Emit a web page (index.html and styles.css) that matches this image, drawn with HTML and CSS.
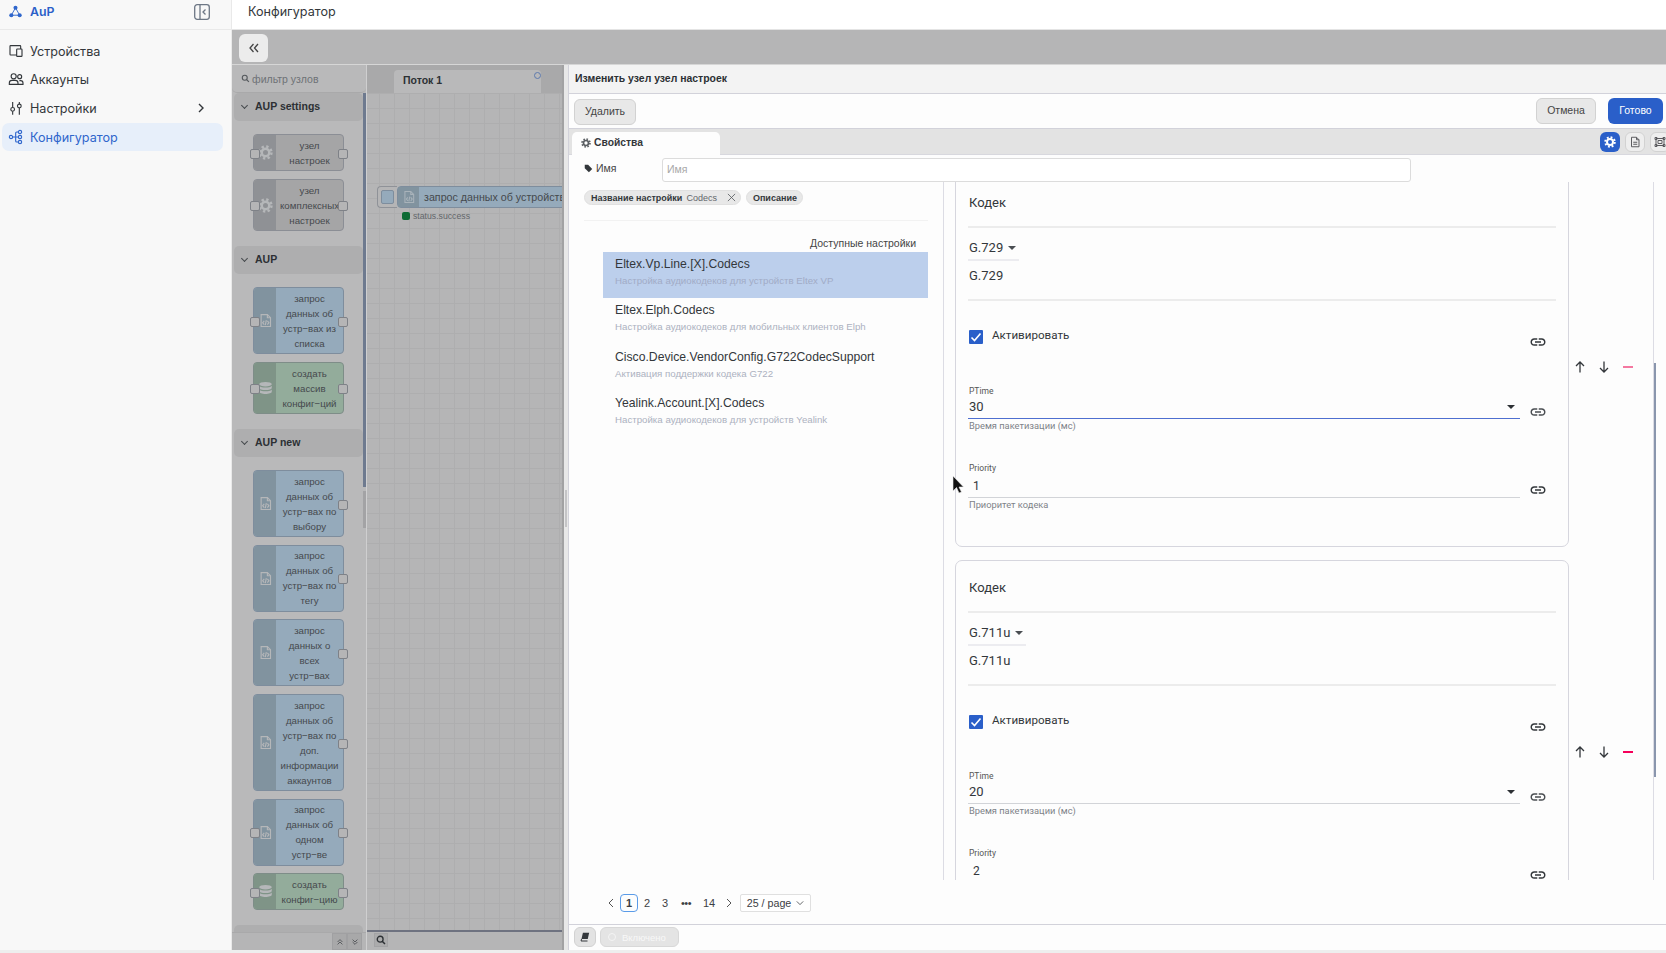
FILE: index.html
```html
<!DOCTYPE html>
<html lang="ru">
<head>
  <meta charset="UTF-8" />
  <title>Конфигуратор</title>
  <link rel="stylesheet" href="styles.css">
</head>
<body>

  <svg class="sprite">
    <symbol id="i-gear" viewBox="0 0 24 24"><circle cx="12" cy="12" r="6" fill="none" stroke="currentColor" stroke-width="4"/><circle cx="12" cy="12" r="9.5" fill="none" stroke="currentColor" stroke-width="4" stroke-dasharray="3.7 3.76"/></symbol>
    <symbol id="i-doc" viewBox="0 0 24 24"><g fill="none" stroke="currentColor" stroke-width="1.8"><path d="M5 2.5h10l5 5v14H5z"/><path d="M15 2.5v5h5"/><path d="M10 12.5l-2.5 3 2.5 3M15 12.5l2.5 3-2.5 3M13.3 11.5l-1.6 8"/></g></symbol>
    <symbol id="i-db" viewBox="0 0 24 24"><g fill="currentColor"><ellipse cx="12" cy="5" rx="10" ry="3.6"/><path d="M2 7.5c2 2.4 5.500 3 10 3s8-.6 10-3V11c0 2-4.500 3.400-10 3.400S2 13 2 11z"/><path d="M2 13.500c2 2.400 5.500 3 10 3s8-.6 10-3V17c0 2-4.500 3.600-10 3.600S2 19 2 17z"/></g></symbol>
    <symbol id="i-link" viewBox="0 0 24 24"><path fill="currentColor" d="M3.900 12c0-1.710 1.390-3.100 3.100-3.100h4V7H7c-2.760 0-5 2.240-5 5s2.240 5 5 5h4v-1.900H7c-1.710 0-3.100-1.390-3.100-3.100zM8 13h8v-2H8v2zm9-6h-4v1.900h4c1.710 0 3.100 1.390 3.100 3.100s-1.390 3.100-3.100 3.100h-4V17h4c2.760 0 5-2.240 5-5s-2.240-5-5-5z"/></symbol>
    <symbol id="i-up" viewBox="0 0 14 14"><path fill="none" stroke="currentColor" stroke-width="1.300" d="M7 12.500V2M3 6l4-4 4 4"/></symbol>
    <symbol id="i-down" viewBox="0 0 14 14"><path fill="none" stroke="currentColor" stroke-width="1.300" d="M7 1.500V12M3 8l4 4 4-4"/></symbol>
  </svg>

  <div class="app">
    <aside class="sidebar">
      <div class="brand">
        <svg class="brand-logo" viewBox="0 0 14 14"><path d="M7 3L2.500 11h9z" fill="none" stroke="currentColor" stroke-width="1"/><circle cx="7" cy="3" r="2.200" fill="currentColor"/><circle cx="2.500" cy="11" r="2.200" fill="currentColor"/><circle cx="11.500" cy="11" r="2.200" fill="currentColor"/></svg>
        <span class="brand-name">AuP</span>
        <svg class="brand-toggle" viewBox="0 0 16 16"><rect x=".7" y=".7" width="14.600" height="14.600" rx="2.500" fill="none" stroke="currentColor" stroke-width="1.300"/><path d="M6 1v14M11.500 5.500L9 8l2.500 2.500" fill="none" stroke="currentColor" stroke-width="1.300"/></svg>
      </div>
      <nav class="nav">
        <a class="nav-item">
          <svg class="nav-icon" viewBox="0 0 24 24"><path d="M13 10a1 1 0 0 1 1-1h6a1 1 0 0 1 1 1v9a1 1 0 0 1-1 1h-6a1 1 0 0 1-1-1zM19 9V5a1 1 0 0 0-1-1H4a1 1 0 0 0-1 1v12a1 1 0 0 0 1 1h9"/></svg>
          <span>Устройства</span>
        </a>
        <a class="nav-item">
          <svg class="nav-icon" viewBox="0 0 24 24"><circle cx="8.500" cy="8" r="3.800"/><circle cx="17.500" cy="8.500" r="3"/><path d="M2 20v-2a4 4 0 0 1 4-4h5a4 4 0 0 1 4 4v2zM17 14.500h2a3.500 3.500 0 0 1 3.500 3.500v2H15"/></svg>
          <span>Аккаунты</span>
        </a>
        <a class="nav-item">
          <svg class="nav-icon" viewBox="0 0 24 24"><circle cx="7" cy="14" r="2.800"/><circle cx="17" cy="9" r="2.800"/><path d="M7 3v8M7 17v5M17 3v3M17 12v10"/></svg>
          <span>Настройки</span>
          <svg class="nav-chevron" viewBox="0 0 10 10"><path d="M3 1l4 4-4 4" fill="none" stroke="currentColor" stroke-width="1.400"/></svg>
        </a>
        <a class="nav-item active">
          <svg class="nav-icon" viewBox="0 0 24 24"><circle cx="4.500" cy="12" r="2.500"/><circle cx="18" cy="4.500" r="2.500"/><circle cx="18" cy="12" r="2.500"/><circle cx="18" cy="19.500" r="2.500"/><path d="M7 12h8.500M15.500 4.500H13a1.500 1.500 0 0 0-1.500 1.500v12a1.500 1.500 0 0 0 1.500 1.500h2.500"/></svg>
          <span>Конфигуратор</span>
        </a>
      </nav>
    </aside>

    <main class="main">
      <header class="topbar">Конфигуратор</header>
      <div class="toolbar">
        <button class="collapse-btn">
          <svg viewBox="0 0 12 12"><path d="M5.500 2L2 6l3.500 4M10 2L6.500 6 10 10" fill="none" stroke="currentColor" stroke-width="1.300"/></svg>
        </button>
      </div>

      <div class="editor">
        <section class="palette">
          <div class="palette-filter">
            <svg viewBox="0 0 12 12"><circle cx="5" cy="5" r="3.300" fill="none" stroke="currentColor" stroke-width="1.500"/><path d="M7.500 7.500l3 3" stroke="currentColor" stroke-width="1.600"/></svg>
            <span>фильтр узлов</span>
          </div>
          <div class="palette-scrollarea">
            <div class="palette-list">
              <div class="category"><span class="cat-arrow"></span>AUP settings</div>
              <div class="cat-nodes short">
                <div class="node gray in out"><div class="node-icon"><svg><use href="#i-gear"/></svg></div><div class="node-label">узел<br>настроек</div></div>
                <div class="node gray in out"><div class="node-icon"><svg><use href="#i-gear"/></svg></div><div class="node-label">узел<br>комплексных<br>настроек</div></div>
              </div>
              <div class="category"><span class="cat-arrow"></span>AUP</div>
              <div class="cat-nodes short">
                <div class="node blue in out"><div class="node-icon"><svg><use href="#i-doc"/></svg></div><div class="node-label">запрос<br>данных об<br>устр−вах из<br>списка</div></div>
                <div class="node green in out"><div class="node-icon"><svg><use href="#i-db"/></svg></div><div class="node-label">создать<br>массив<br>конфиг−ций</div></div>
              </div>
              <div class="category"><span class="cat-arrow"></span>AUP new</div>
              <div class="cat-nodes">
                <div class="node blue out"><div class="node-icon"><svg><use href="#i-doc"/></svg></div><div class="node-label">запрос<br>данных об<br>устр−вах по<br>выбору</div></div>
                <div class="node blue out"><div class="node-icon"><svg><use href="#i-doc"/></svg></div><div class="node-label">запрос<br>данных об<br>устр−вах по<br>тегу</div></div>
                <div class="node blue out"><div class="node-icon"><svg><use href="#i-doc"/></svg></div><div class="node-label">запрос<br>данных о<br>всех<br>устр−вах</div></div>
                <div class="node blue out"><div class="node-icon"><svg><use href="#i-doc"/></svg></div><div class="node-label">запрос<br>данных об<br>устр−вах по<br>доп.<br>информации<br>аккаунтов</div></div>
                <div class="node blue in out"><div class="node-icon"><svg><use href="#i-doc"/></svg></div><div class="node-label">запрос<br>данных об<br>одном<br>устр−ве</div></div>
                <div class="node green in out"><div class="node-icon"><svg><use href="#i-db"/></svg></div><div class="node-label">создать<br>конфиг−цию</div></div>
              </div>
              <div class="category"></div>
            </div>
            <div class="palette-scroll">
              <div class="scroll-thumb"></div>
              <div class="scroll-grip"></div>
            </div>
          </div>
          <div class="palette-foot">
            <button class="foot-btn"><svg viewBox="0 0 10 10"><path d="M2 5l3-3 3 3M2 8l3-3 3 3" fill="none" stroke="currentColor" stroke-width="1"/></svg></button><button class="foot-btn"><svg viewBox="0 0 10 10"><path d="M2 2l3 3 3-3M2 5l3 3 3-3" fill="none" stroke="currentColor" stroke-width="1"/></svg></button>
          </div>
        </section>

        <section class="workspace">
          <div class="ws-tabs">
            <div class="ws-tab">Поток 1<span class="ws-tab-dot"></span></div>
          </div>
          <div class="ws-grid">
            <div class="flow-node">
              <div class="flow-button"><span></span></div>
              <div class="flow-body">
                <div class="flow-icon"><svg><use href="#i-doc"/></svg></div>
                <div class="flow-label">запрос данных об устройстве</div>
              </div>
              <div class="flow-status"><span class="status-dot"></span>status.success</div>
            </div>
          </div>
          <div class="ws-foot">
            <button class="ws-search"><svg viewBox="0 0 12 12"><circle cx="5" cy="5" r="3.500" fill="none" stroke="currentColor" stroke-width="1.600"/><path d="M7.500 7.500l3.300 3.300" stroke="currentColor" stroke-width="1.800"/></svg></button>
          </div>
        </section>

        <div class="ws-sep"><span></span></div>

        <section class="tray">
          <div class="tray-title">Изменить узел узел настроек</div>
          <div class="tray-actions">
            <button class="btn">Удалить</button>
            <div class="tray-actions-right">
              <button class="btn btn-cancel">Отмена</button>
              <button class="btn btn-primary">Готово</button>
            </div>
          </div>
          <div class="tray-tabs">
            <div class="tray-tab"><svg><use href="#i-gear"/></svg>Свойства</div>
            <div class="tray-tab-btns">
              <button class="tab-btn on"><svg><use href="#i-gear"/></svg></button>
              <button class="tab-btn"><svg viewBox="0 0 24 24"><path d="M5 2.500h10l5 5v14H5zM15 2.500v5h5M8.500 12.500h8M8.500 16.500h8" fill="none" stroke="currentColor" stroke-width="2"/></svg></button>
              <button class="tab-btn"><svg viewBox="0 0 24 24"><path d="M4 5h16v14H4zM2 3h4v4H2zM18 3h4v4h-4zM2 17h4v4H2zM18 17h4v4h-4zM8 9h8v6H8z" fill="none" stroke="currentColor" stroke-width="2"/></svg></button>
            </div>
          </div>
          <div class="name-row">
            <label class="name-label">
              <svg viewBox="0 0 12 12"><path d="M1 1h4.500L11 6.500 6.500 11 1 5.500z" fill="currentColor"/></svg>Имя
            </label>
            <div class="name-input">Имя</div>
          </div>

          <div class="tray-body">
            <div class="settings-col">
              <div class="chips">
                <span class="chip"><b>Название настройки</b><span class="chip-value">Codecs</span>
                  <svg viewBox="0 0 10 10"><path d="M1 1l8 8M9 1l-8 8" stroke="currentColor" stroke-width=".9"/></svg>
                </span>
                <span class="chip chip-plain"><b>Описание</b></span>
              </div>
              <div class="settings-divider"></div>
              <div class="settings-caption">Доступные настройки</div>
              <ul class="settings-list">
                <li class="selected"><div class="set-name">Eltex.Vp.Line.[X].Codecs</div><div class="set-desc">Настройка аудиокодеков для устройств Eltex VP</div></li>
                <li><div class="set-name">Eltex.Elph.Codecs</div><div class="set-desc">Настройка аудиокодеков для мобильных клиентов Elph</div></li>
                <li><div class="set-name">Cisco.Device.VendorConfig.G722CodecSupport</div><div class="set-desc">Активация поддержки кодека G722</div></li>
                <li><div class="set-name">Yealink.Account.[X].Codecs</div><div class="set-desc">Настройка аудиокодеков для устройств Yealink</div></li>
              </ul>
            </div>

            <div class="codecs-col">
              <div class="codecs-list">
                <div class="codec-row">
                  <div class="card">
                    <div class="card-title">Кодек</div>
                    <div class="inline-select">G.729<i class="caret"></i></div>
                    <div class="card-value">G.729</div>
                    <div class="check-row">
                      <div class="field-main"><span class="checkbox"><svg viewBox="0 0 14 14"><path d="M2.500 7.500l3 3 6-7" fill="none" stroke="#fff" stroke-width="1.600"/></svg></span>Активировать</div>
                      <svg class="link-icon link-check"><use href="#i-link"/></svg>
                    </div>
                    <div class="field">
                      <div class="field-main">
                        <div class="field-label">PTime</div>
                        <div class="field-input focused">30<i class="caret caret-right"></i></div>
                        <div class="field-help">Время пакетизации (мс)</div>
                      </div>
                      <svg class="link-icon link-field"><use href="#i-link"/></svg>
                    </div>
                    <div class="field field-second">
                      <div class="field-main">
                        <div class="field-label">Priority</div>
                        <div class="field-input number">1</div>
                        <div class="field-help">Приоритет кодека</div>
                      </div>
                      <svg class="link-icon link-number"><use href="#i-link"/></svg>
                    </div>
                  </div>
                  <div class="row-actions">
                    <svg><use href="#i-up"/></svg>
                    <svg><use href="#i-down"/></svg>
                    <span class="remove pale"></span>
                  </div>
                </div>

                <div class="codec-row">
                  <div class="card">
                    <div class="card-title">Кодек</div>
                    <div class="inline-select">G.711u<i class="caret"></i></div>
                    <div class="card-value">G.711u</div>
                    <div class="check-row">
                      <div class="field-main"><span class="checkbox"><svg viewBox="0 0 14 14"><path d="M2.500 7.500l3 3 6-7" fill="none" stroke="#fff" stroke-width="1.600"/></svg></span>Активировать</div>
                      <svg class="link-icon link-check"><use href="#i-link"/></svg>
                    </div>
                    <div class="field">
                      <div class="field-main">
                        <div class="field-label">PTime</div>
                        <div class="field-input">20<i class="caret caret-right"></i></div>
                        <div class="field-help">Время пакетизации (мс)</div>
                      </div>
                      <svg class="link-icon link-field"><use href="#i-link"/></svg>
                    </div>
                    <div class="field field-second">
                      <div class="field-main">
                        <div class="field-label">Priority</div>
                        <div class="field-input number">2</div>
                        <div class="field-help">Приоритет кодека</div>
                      </div>
                      <svg class="link-icon link-number"><use href="#i-link"/></svg>
                    </div>
                  </div>
                  <div class="row-actions">
                    <svg><use href="#i-up"/></svg>
                    <svg><use href="#i-down"/></svg>
                    <span class="remove"></span>
                  </div>
                </div>
              </div>
              <div class="codecs-scroll"><div></div></div>
            </div>
          </div>

          <div class="pager">
            <svg class="pager-arrow" viewBox="0 0 10 10"><path d="M7 1L3 5l4 4" fill="none" stroke="currentColor"/></svg>
            <span class="page current">1</span>
            <span class="page">2</span>
            <span class="page">3</span>
            <span class="page dots">•••</span>
            <span class="page wide">14</span>
            <svg class="pager-arrow" viewBox="0 0 10 10"><path d="M3 1l4 4-4 4" fill="none" stroke="currentColor"/></svg>
            <span class="page-size">25 / page<svg viewBox="0 0 10 10"><path d="M1 3l4 4 4-4" fill="none" stroke="currentColor"/></svg></span>
          </div>
          <div class="tray-footer">
            <button class="foot-book"><svg viewBox="0 0 12 12"><path d="M3.500 1h7.500L9.300 8.500H1.800z" fill="currentColor"/><path d="M1.800 8.500L1.300 10.800H9" fill="none" stroke="currentColor" stroke-width="1.200"/></svg></button>
            <button class="foot-enabled"><span></span>Включено</button>
          </div>
        </section>
      </div>
    </main>
  </div>

  <svg class="cursor" viewBox="0 0 12 19"><path d="M1 1v15l3.500-3.500L7 18l2.500-1-2.500-5h4.500z" fill="#111" stroke="#eee" stroke-width=".6"/></svg>

</body>
</html>
```

FILE: styles.css
```css
* {
  box-sizing: border-box;
}

html, body {
  margin: 0;
  height: 953px;
  overflow: hidden;
}

body {
  background: #eeeeee;
  font-family: 'Liberation Sans', Arial, sans-serif;
  color: #33373b;
  position: relative;
}

button {
  font-family: inherit;
  padding: 0;
  cursor: pointer;
}

.sprite {
  position: absolute;
  width: 0;
  height: 0;
}

.cursor {
  position: absolute;
  left: 952px;
  top: 475px;
  width: 12px;
  height: 19px;
}

.app {
  display: flex;
  height: 950px;
}

/* sidebar */
.sidebar {
  width: 232px;
  flex: none;
  background: #f8f8f8;
  border-right: 1px solid #e9e9e9;
  font-family: Inter, sans-serif;
  font-size: 12.600px;
}

.brand {
  height: 30px;
  display: flex;
  align-items: center;
  padding: 0 21px 6px 9px;
  border-bottom: 1px solid #e9e9e9;
}

.brand-logo {
  width: 13px;
  height: 13px;
  color: #2f66cc;
}

.brand-name {
  margin-left: 8px;
  color: #2a5fc8;
  font-weight: 600;
  font-size: 12.300px;
}

.brand-toggle {
  margin-left: auto;
  width: 16px;
  height: 16px;
  color: #6d7785;
}

.nav {
  padding: 5px 8px 0 2px;
}

.nav-item {
  display: flex;
  align-items: center;
  height: 28px;
  margin-top: 1px;
  padding-left: 6px;
  border-radius: 7px;
  color: #33373b;
}

.nav-item:first-child {
  padding-top: 2px;
}

.nav-item span {
  margin-left: 6px;
}

.nav-icon {
  width: 16px;
  height: 16px;
  fill: none;
  stroke: currentColor;
  stroke-width: 1.700;
}

.nav-chevron {
  width: 10px;
  height: 10px;
  margin-left: auto;
  margin-right: 17px;
}

.nav-item.active {
  background: #e7effa;
  color: #2f66cc;
}

/* main column */
.main {
  flex: 1;
  min-width: 0;
  display: flex;
  flex-direction: column;
}

.topbar {
  height: 30px;
  background: #ffffff;
  border-bottom: 1px solid #e4e4e4;
  padding: 4px 0 0 16px;
  font-family: Inter, sans-serif;
  font-size: 12.600px;
  color: #33373b;
}

.toolbar {
  height: 35px;
  background: #b5b5b6;
  padding: 4px 0 0 7px;
  border-bottom: 1px solid #d6d6d6;
}

.collapse-btn {
  width: 29px;
  height: 28px;
  border: none;
  border-radius: 6px;
  background: #ececec;
  color: #444;
  display: flex;
  align-items: center;
  justify-content: center;
}

.collapse-btn svg {
  width: 12px;
  height: 12px;
}

.editor {
  flex: 1;
  min-height: 0;
  display: flex;
}

/* node palette */
.palette {
  width: 134px;
  flex: none;
  background: #b9b9ba;
  display: flex;
  flex-direction: column;
  color: #45494d;
}

.palette-filter {
  height: 28px;
  display: flex;
  align-items: center;
  padding-left: 9px;
  font-size: 10.500px;
  color: #6e7276;
  border-bottom: 1px solid #a9a9aa;
  border-radius: 0 0 5px 5px;
}

.palette-filter svg {
  width: 9px;
  height: 9px;
  margin-right: 2px;
  color: #55595d;
}

.palette-scrollarea {
  flex: 1;
  min-height: 0;
  display: flex;
}

.palette-list {
  width: 131px;
  overflow: hidden;
  padding-left: 2px;
}

.category {
  height: 28px;
  padding-bottom: 2px;
  border-radius: 5px;
  background: #aeaeaf;
  font-size: 10.500px;
  font-weight: bold;
  color: #2c3034;
  display: flex;
  align-items: center;
}

.cat-arrow {
  width: 5px;
  height: 5px;
  margin: -2px 8px 0 8px;
  border-right: 1px solid #45494d;
  border-bottom: 1px solid #45494d;
  transform: rotate(45deg);
}

.cat-nodes {
  display: flex;
  flex-direction: column;
  gap: 7.700px;
  padding: 13px 0 15px 19px;
}

.cat-nodes.short {
  gap: 8px;
}

.node {
  position: relative;
  width: 91px;
  display: flex;
  border: 1px solid #8b8e95;
  border-radius: 4px;
  background: #a5a5a6;
}

.node-icon {
  width: 22px;
  flex: none;
  display: flex;
  align-items: center;
  justify-content: center;
  border-radius: 3px 0 0 3px;
  color: #b5b7b9;
}

.node-icon svg {
  width: 15px;
  height: 15px;
}

.node-label {
  flex: 1;
  padding: 2.500px 0;
  font-size: 9.700px;
  line-height: 15px;
  text-align: center;
  white-space: nowrap;
}

.node.gray .node-icon {
  background: #8f9195;
}

.node.blue {
  background: #95aabb;
  border-color: #7e8d9d;
}

.node.blue .node-icon {
  background: #81939f;
}

.node.green {
  background: #93ac9b;
  border-color: #7e8d88;
}

.node.green .node-icon {
  background: #7f9487;
}

.node.in::before,
.node.out::after {
  content: '';
  position: absolute;
  top: 50%;
  width: 8px;
  height: 8px;
  margin-top: -4px;
  background: #b5b5b6;
  border: 1px solid #7e8187;
  border-radius: 2px;
}

.node.in::before {
  left: -4px;
}

.node.out::after {
  right: -5px;
}

.palette-scroll {
  width: 3px;
  flex: none;
}

.scroll-thumb {
  width: 3px;
  height: 394px;
  background: #6e7a8f;
}

.scroll-grip {
  width: 3px;
  height: 37px;
  margin-top: 4px;
  background: #a3a3a5;
}

.palette-foot {
  height: 18px;
  display: flex;
  justify-content: flex-end;
  padding-right: 4px;
  background: #b5b5b6;
  border-top: 1px solid #a9a9aa;
}

.foot-btn {
  width: 15px;
  height: 17px;
  border: 1px solid #a0a0a2;
  background: #a8a8a9;
  color: #45494d;
  display: flex;
  align-items: center;
  justify-content: center;
}

.foot-btn svg {
  width: 8px;
  height: 8px;
}

/* workspace */
.workspace {
  width: 196px;
  flex: none;
  display: flex;
  flex-direction: column;
  border-left: 1px solid #cfcfd0;
}

.ws-tabs {
  height: 28px;
  background: #a9a9aa;
  padding: 5px 0 0 27px;
}

.ws-tab {
  position: relative;
  width: 147px;
  height: 23px;
  border-radius: 4px 4px 0 0;
  background: #b9b9ba;
  padding: 4px 0 0 9px;
  font-size: 10.500px;
  font-weight: bold;
  color: #2c3034;
}

.ws-tab-dot {
  position: absolute;
  right: 0;
  top: 2px;
  width: 7px;
  height: 7px;
  border: 1px solid #5d79ad;
  border-radius: 50%;
}

.ws-grid {
  flex: 1;
  position: relative;
  overflow: hidden;
  background-color: #b5b5b6;
  background-image: linear-gradient(#aeaeaf 1px, transparent 1px), linear-gradient(90deg, #aeaeaf 1px, transparent 1px);
  background-size: 15px 15px;
  background-position: -3px 0;
}

.flow-node {
  position: absolute;
  left: 10px;
  top: 93px;
  display: flex;
  color: #45494d;
}

.flow-button {
  width: 20px;
  height: 22px;
  border: 1px solid #8f9298;
  border-right: none;
  border-radius: 4px 0 0 4px;
  background: #b5b5b6;
  padding: 3px;
}

.flow-button span {
  display: block;
  width: 13px;
  height: 14px;
  border: 1px solid #7e8d9d;
  border-radius: 2px;
  background: #95aabb;
}

.flow-body {
  width: 220px;
  height: 22px;
  display: flex;
  border: 1px solid #7e8d9d;
  border-radius: 4px;
  background: #95aabb;
}

.flow-icon {
  width: 21px;
  flex: none;
  background: #81939f;
  display: flex;
  align-items: center;
  justify-content: center;
  color: #a9b3ba;
}

.flow-icon svg {
  width: 14px;
  height: 14px;
}

.flow-label {
  padding-left: 5px;
  font-size: 10.700px;
  line-height: 20px;
  white-space: nowrap;
}

.flow-status {
  position: absolute;
  left: 25px;
  top: 25px;
  display: flex;
  align-items: center;
  font-size: 8.700px;
  color: #62666a;
  white-space: nowrap;
}

.status-dot {
  width: 8px;
  height: 8px;
  margin-right: 3px;
  border-radius: 2px;
  background: #0c6b34;
}

.ws-foot {
  height: 20px;
  background: #b5b5b6;
  border-top: 2px solid #6e7280;
  padding: 1px 0 0 7px;
}

.ws-search {
  width: 14px;
  height: 14px;
  border: 1px solid #a3a3a5;
  background: #ababac;
  color: #2c3034;
  display: flex;
  align-items: center;
  justify-content: center;
}

.ws-search svg {
  width: 10px;
  height: 10px;
}

.ws-sep {
  width: 6px;
  flex: none;
  background: #e8e8e8;
  border-left: 2px solid #a2a2a3;
  padding-top: 425px;
}

.ws-sep span {
  display: block;
  width: 2px;
  height: 37px;
  margin-left: 1px;
  background: #c4c4c6;
}

/* edit tray */
.tray {
  flex: 1;
  min-width: 0;
  display: flex;
  flex-direction: column;
  background: #fdfdfd;
  border-left: 1px solid #d2d2da;
  overflow: hidden;
}

.tray-title {
  height: 29px;
  flex: none;
  background: #f3f3f3;
  border-bottom: 1px solid #d2d2da;
  padding: 8px 0 0 6px;
  font-size: 10.450px;
  font-weight: bold;
  color: #2c3034;
}

.tray-actions {
  height: 34px;
  flex: none;
  display: flex;
  justify-content: space-between;
  padding: 5px 3px 0 5px;
}

.tray-actions-right {
  display: flex;
  gap: 12px;
}

.btn {
  height: 26px;
  width: 62px;
  border: 1px solid #d2d2d2;
  border-radius: 6px;
  background: #e8e8e8;
  color: #444;
  font-size: 10.500px;
  padding-bottom: 2px;
}

.btn-cancel {
  width: 60px;
  margin-top: -1px;
}

.btn-primary {
  width: 55px;
  margin-top: -1px;
  border: none;
  background: #2a5fc9;
  color: #ffffff;
}

.tray-tabs {
  height: 27px;
  flex: none;
  display: flex;
  justify-content: space-between;
  background: #e3e3e3;
  border-top: 1px solid #d2d2da;
  border-bottom: 1px solid #d8d8de;
  padding: 3px 0 0 3px;
}

.tray-tab {
  width: 148px;
  height: 23px;
  margin-bottom: 1px;
  display: flex;
  align-items: center;
  padding: 0 0 2px 9px;
  border-radius: 5px 5px 0 0;
  background: #fdfdfd;
  font-size: 10.300px;
  font-weight: bold;
  color: #33373b;
}

.tray-tab svg {
  width: 10px;
  height: 10px;
  margin-right: 3px;
  color: #5a5e62;
}

.tray-tab-btns {
  display: flex;
  gap: 5px;
  margin-right: -4px;
}

.tab-btn {
  width: 20px;
  height: 20px;
  flex: none;
  border: 1px solid #d2d2d2;
  border-radius: 6px;
  background: #eeeeee;
  color: #5c5c60;
  display: flex;
  align-items: center;
  justify-content: center;
}

.tab-btn svg {
  width: 12px;
  height: 12px;
}

.tab-btn.on {
  border: none;
  background: #2a5fc9;
  color: #ffffff;
}

.name-row {
  height: 27px;
  flex: none;
  display: flex;
  padding: 3px 0 0 15px;
}

.name-label {
  width: 78px;
  display: flex;
  align-items: center;
  height: 20px;
  font-size: 10.500px;
  color: #444;
}

.name-label svg {
  width: 9px;
  height: 9px;
  margin-right: 3px;
  color: #33373b;
}

.name-input {
  width: 749px;
  height: 24px;
  border: 1px solid #dcdcdc;
  border-radius: 3px;
  background: #ffffff;
  padding: 4px 0 0 4px;
  font-size: 10.500px;
  color: #a8a8a8;
}

.tray-body {
  height: 698px;
  flex: none;
  display: flex;
}

/* settings list */
.settings-col {
  width: 375px;
  flex: none;
  border-right: 1px solid #dcdce4;
  padding: 8px 15px 0 15px;
}

.chips {
  display: flex;
  gap: 5px;
}

.chip {
  height: 15px;
  display: flex;
  align-items: center;
  padding: 0 4px 0 6px;
  border-radius: 8px;
  background: #e8e8e8;
  border: 1px solid #e0e0e0;
  font-size: 9px;
  color: #33373b;
}

.chip-value {
  margin-left: 4px;
  color: #62666a;
}

.chip svg {
  width: 9px;
  height: 9px;
  margin-left: 10px;
  color: #55595d;
}

.chip-plain {
  padding-right: 5px;
}

.settings-divider {
  height: 1px;
  margin-top: 15px;
  background: #f2f2f2;
}

.settings-caption {
  margin-top: 16px;
  padding-right: 12px;
  text-align: right;
  font-size: 10.500px;
  line-height: 13px;
  color: #444;
}

.settings-list {
  list-style: none;
  margin: 2px 0 0 19px;
  padding: 0;
}

.settings-list li {
  height: 46.300px;
  padding: 5px 0 0 12px;
}

.settings-list li.selected {
  background: #bccfec;
}

.set-name {
  font-size: 12.200px;
  line-height: 14px;
  color: #33373b;
}

.set-desc {
  margin-top: 4px;
  font-size: 9.700px;
  line-height: 12px;
  color: #acb1c0;
}

.selected .set-desc {
  color: #a1abc6;
}

/* codec cards */
.codecs-col {
  flex: 1;
  min-width: 0;
  display: flex;
  overflow: hidden;
}

.codecs-list {
  width: 709px;
  flex: none;
  overflow: hidden;
  padding: 0 0 0 11px;
}

.codec-row {
  display: flex;
  margin-bottom: 13px;
}

.codec-row:first-child {
  margin-top: -7px;
}

.card {
  width: 614px;
  height: 372px;
  flex: none;
  border: 1px solid #d6d6de;
  border-radius: 7px;
  padding: 0 12px;
  font-family: Roboto, sans-serif;
  font-size: 14px;
  color: #33373b;
}

.card-title {
  height: 52px;
  padding: 18px 0 0 1px;
  line-height: 18px;
  border-bottom: 2px solid #ececec;
  font-size: 13px;
}

.inline-select {
  width: fit-content;
  height: 25px;
  margin-top: 8px;
  padding: 3px 0 0 1px;
  border-bottom: 2px solid #ececf0;
  line-height: 18px;
  font-size: 13px;
  display: flex;
  gap: 5px;
}

.caret {
  display: inline-block;
  margin-top: 7px;
  margin-right: 3px;
  border-left: 4px solid transparent;
  border-right: 4px solid transparent;
  border-top: 4px solid #4a4e52;
}

.caret-right {
  margin: 7px 5px 0 auto;
  border-top-color: #2c3034;
}

.card-value {
  height: 35px;
  margin-top: 5px;
  padding: 1px 0 0 1px;
  line-height: 18px;
  font-size: 13px;
  border-bottom: 2px solid #ececec;
}

.check-row {
  height: 54px;
  margin-top: 29px;
  display: flex;
  font-size: 11.600px;
}

.field-main {
  width: 552px;
  flex: none;
}

.check-row .field-main {
  display: flex;
  height: 14px;
  line-height: 11px;
  color: #33373b;
}

.checkbox {
  width: 14px;
  height: 14px;
  margin: 0 9px 0 1px;
  border-radius: 1px;
  background: #2a5fc9;
}

.checkbox svg {
  display: block;
  width: 14px;
  height: 14px;
}

.field {
  display: flex;
}

.field-second {
  margin-top: 29px;
}

.field-label {
  height: 12px;
  padding: 1px 0 0 1px;
  font-size: 8.500px;
  line-height: 12px;
  color: #555;
}

.field-input {
  height: 23px;
  display: flex;
  padding: 2px 0 0 1px;
  line-height: 18px;
  font-size: 13px;
  border-bottom: 1px solid #d2d4d8;
}

.field-input.focused {
  border-bottom-color: #4e6fd0;
}

.field-input.number {
  height: 25px;
  padding: 4px 0 0 5px;
  font-size: 12px;
}

.field-help {
  margin-top: 1px;
  padding-left: 1px;
  font-size: 9.300px;
  line-height: 12px;
  color: #7d8288;
}

.link-icon {
  width: 18px;
  height: 18px;
  margin-left: 9px;
  color: #33373b;
}

.link-check {
  margin-top: 3px;
}

.link-field {
  margin-top: 19px;
  color: #4a4e52;
}

.link-number {
  margin-top: 20px;
}

.row-actions {
  display: flex;
  align-items: center;
  gap: 10px;
  padding: 12px 0 0 4px;
  color: #33373b;
}

.row-actions svg {
  width: 14px;
  height: 14px;
}

.remove {
  width: 10px;
  height: 2px;
  margin-left: 2px;
  background: #f5005a;
}

.remove.pale {
  background: #f478a0;
}

.codecs-scroll {
  width: 3px;
  padding-top: 181px;
  border-left: 1px solid #dcdce4;
}

.codecs-scroll div {
  width: 2px;
  height: 414px;
  background: #8a96ad;
}

/* pager and footer */
.pager {
  height: 44px;
  flex: none;
  display: flex;
  align-items: center;
  padding: 2px 0 0 37px;
  font-size: 11px;
  color: #3c4044;
}

.pager-arrow {
  width: 10px;
  height: 10px;
  color: #555;
}

.page {
  width: 18px;
  text-align: center;
}

.pager-arrow + .page {
  margin-left: 4px;
}

.page.current {
  height: 18px;
  line-height: 16px;
  border: 1px solid #5a9be8;
  border-radius: 4px;
  font-weight: bold;
}

.page.dots {
  width: 24px;
  font-size: 11px;
  letter-spacing: -.5px;
}

.page.wide {
  width: 22px;
  margin: 0 4px 0 0;
}

.page-size {
  width: 71px;
  height: 18px;
  margin-left: 6px;
  display: flex;
  align-items: center;
  justify-content: center;
  gap: 5px;
  border: 1px solid #e0e0e0;
  border-radius: 2px;
  background: #ffffff;
  font-size: 10.700px;
}

.page-size svg {
  width: 8px;
  height: 8px;
}

.tray-footer {
  flex: 1;
  display: flex;
  gap: 4px;
  border-top: 1px solid #d2d2da;
  padding: 2px 0 0 5px;
}

.foot-book {
  width: 22px;
  height: 20px;
  border: 1px solid #d2d2d2;
  border-radius: 6px;
  background: #e3e3e3;
  color: #33373b;
  display: flex;
  align-items: center;
  justify-content: center;
}

.foot-book svg {
  width: 10px;
  height: 10px;
}

.foot-enabled {
  width: 79px;
  height: 20px;
  border: 1px solid #d8d8d8;
  border-radius: 6px;
  background: #e4e4e4;
  color: #f8f8f8;
  font-size: 9.500px;
  display: flex;
  align-items: center;
  gap: 6px;
  padding-left: 7px;
}

.foot-enabled span {
  width: 8px;
  height: 8px;
  border: 1px solid #f4f4f4;
  border-radius: 50%;
}
```
